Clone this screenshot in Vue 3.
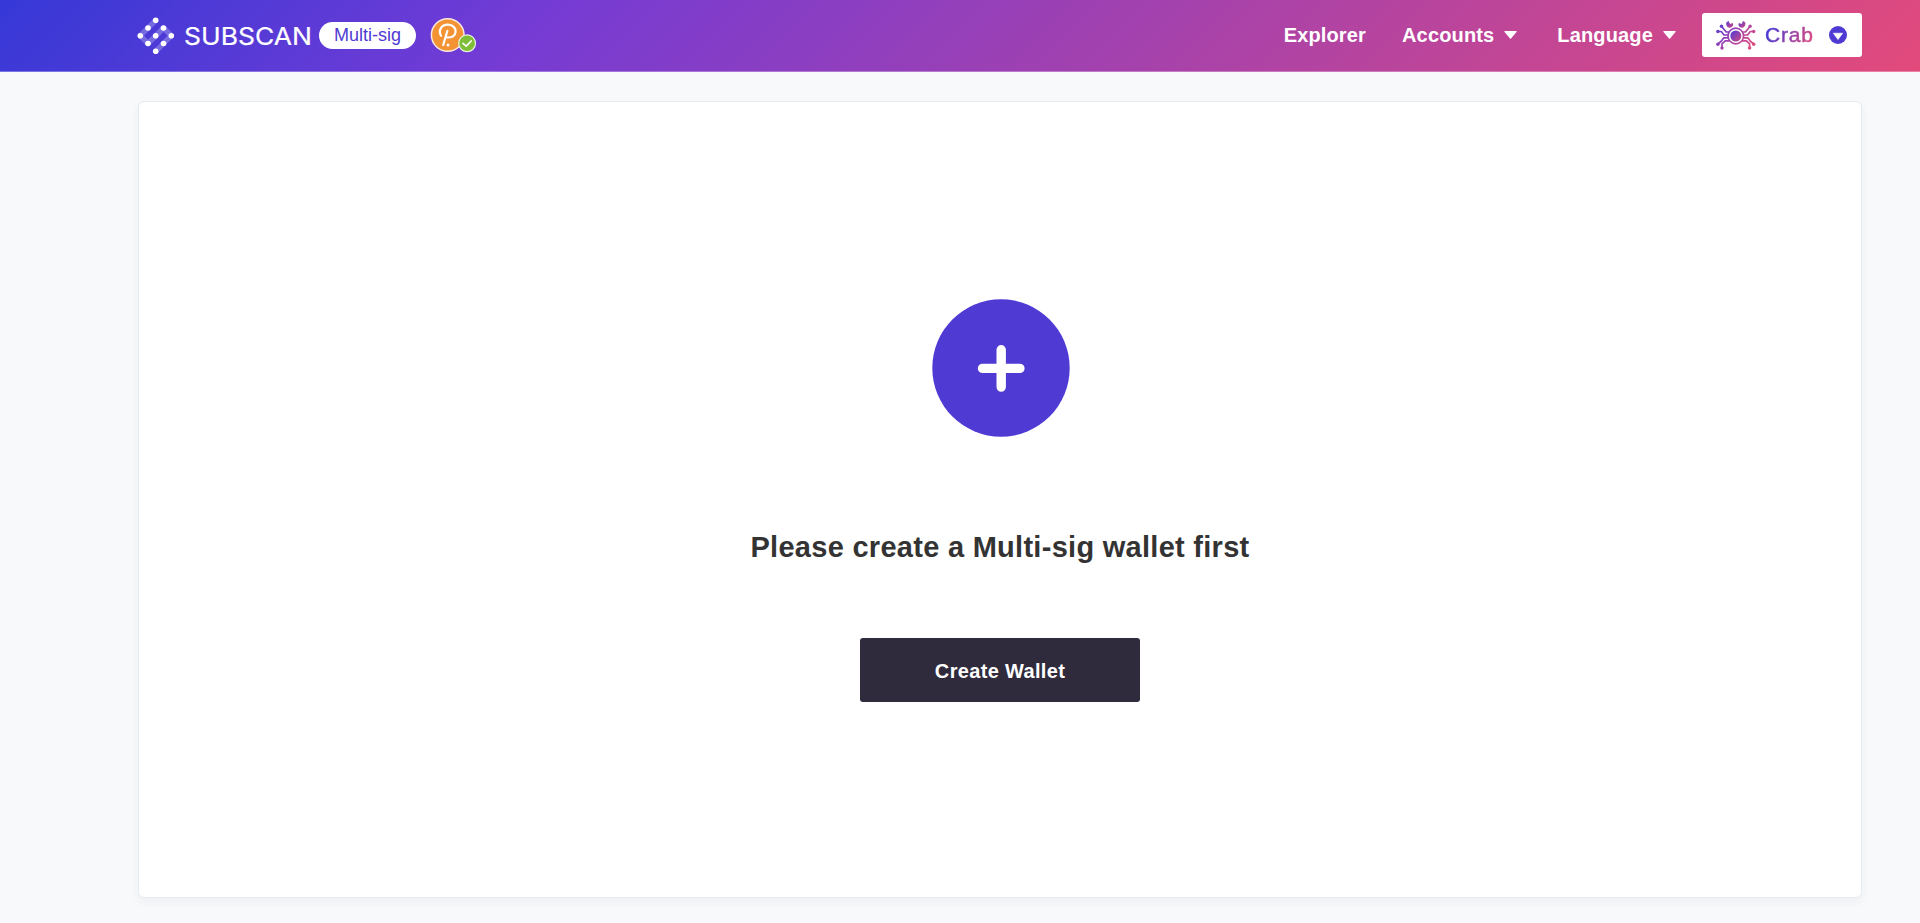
<script setup>
const nav = [
  { label: 'Explorer', menu: false },
  { label: 'Accounts', menu: true },
  { label: 'Language', menu: true },
]
const dots = [
  [155.7, 20.3], [148, 28], [163.5, 28], [140.3, 35.7], [155.7, 35.7],
  [171.3, 35.7], [148, 43.5], [163.5, 43.5], [155.7, 51.3],
]
</script>

<template>
  <div class="page">
    <header class="header">
      <div class="brand">
        <svg class="mark" viewBox="137 17 38 38" width="38" height="38">
          <path d="M155.7 20.3L140.3 35.7L148 43.5L163.5 28L171.3 35.7L155.7 51.3" fill="none" stroke="#fff" stroke-opacity=".25" stroke-width="5.4" stroke-linejoin="round" />
          <circle v-for="(d, i) in dots" :key="i" :cx="d[0]" :cy="d[1]" r="2.8" fill="#fff" />
        </svg>
        <svg class="wordmark" viewBox="0 0 130 26" width="130" height="26">
          <text x="0" y="22.500" textLength="128" lengthAdjust="spacingAndGlyphs">SUBSCAN</text>
        </svg>
        <span class="pill">Multi-sig</span>
        <svg class="extension" viewBox="430 17 47 37" width="47" height="37">
          <circle cx="447.7" cy="35" r="16.3" fill="#f39334" stroke="#fae9dc" stroke-width="1.5" />
          <path d="M441 35.700C438 30 441.500 24.700 447.800 24.700C453.300 24.700 456 28.400 455.600 32C455.200 36.200 451.500 38 446.400 37.400M447.400 30.800L443.200 45" fill="none" stroke="#fff" stroke-width="2.200" stroke-linecap="round" stroke-linejoin="round" />
          <circle cx="448" cy="45" r="1.500" fill="#fff" />
          <circle cx="467.100" cy="43.300" r="8.400" fill="#7fbe36" stroke="#e9f3df" stroke-width="1.200" />
          <path d="M463 43.400L466.200 46.200L471.200 41" fill="none" stroke="#fff" stroke-width="1.700" stroke-linecap="round" stroke-linejoin="round" />
        </svg>
      </div>
      <div class="right">
        <nav class="nav">
          <a v-for="n in nav" :key="n.label" class="link">
            {{ n.label }}
            <svg v-if="n.menu" class="caret" viewBox="0 0 13 8" width="13" height="8"><path d="M.7 0H12.3Q13 .2 12.5 .9L7 7.5Q6.5 8 6 7.5L.5 .9Q0 .2 .7 0Z" fill="#fff" /></svg>
          </a>
        </nav>
        <div class="network">
          <svg class="crab" viewBox="0 0 40 30" width="40" height="30">
            <defs>
              <linearGradient id="crab-line" gradientUnits="userSpaceOnUse" x1="4" y1="4" x2="32" y2="30">
                <stop offset="0" stop-color="#5a3ad0" />
                <stop offset=".5" stop-color="#a844ad" />
                <stop offset="1" stop-color="#df4a7c" />
              </linearGradient>
              <linearGradient id="crab-body" x1="0" y1="0" x2="1" y2="1">
                <stop offset="0" stop-color="#4b3ad5" />
                <stop offset="1" stop-color="#d04a85" />
              </linearGradient>
              <linearGradient id="crab-claw" x1="0" y1="0" x2="1" y2="1">
                <stop offset="0" stop-color="#5a3ad0" />
                <stop offset="1" stop-color="#d04a85" />
              </linearGradient>
            </defs>
            <g fill="none" stroke="url(#crab-line)" stroke-width="1.7" stroke-linejoin="round">
              <circle cx="19.800" cy="16" r="7.800" />
              <path d="M13.500 12H10.200L5.600 6.500M12 15H8L5.300 11.500H1.800M12 17.800H7.800L5 21.500L1.800 24M13.500 20.800H9.200L6 23.800V28M26.100 12H29.400L34 6.500M27.600 15H31.600L34.300 11.500H37.800M27.600 17.800H31.800L34.600 21.500L37.800 24M26.100 20.800H30.400L33.600 23.800V28" />
            </g>
            <circle cx="19.800" cy="16" r="5.500" fill="url(#crab-body)" />
            <g fill="url(#crab-claw)">
              <path d="M12.600 1A3.400 3.400 0 1 0 16.800 3L14 4Z" />
              <path d="M27 1A3.400 3.400 0 1 1 22.800 3L25.600 4Z" />
            </g>
            <g fill="url(#crab-line)">
              <circle cx="5.500" cy="6.300" r="1.700" /><circle cx="34.100" cy="6.300" r="1.700" />
              <circle cx="1.900" cy="11.500" r="1.700" /><circle cx="37.700" cy="11.500" r="1.700" />
              <circle cx="1.900" cy="24.200" r="1.700" /><circle cx="37.700" cy="24.200" r="1.700" />
              <circle cx="6" cy="28" r="1.700" /><circle cx="33.600" cy="28" r="1.700" />
            </g>
          </svg>
          <span class="network-name">Crab</span>
          <svg class="toggle" viewBox="0 0 18 18" width="18" height="18">
            <circle cx="9" cy="9" r="9" fill="#4f3ad4" />
            <path d="M4.300 7.200H13.700L9 13.600Z" fill="#fff" stroke="#fff" stroke-width=".6" stroke-linejoin="round" />
          </svg>
        </div>
      </div>
    </header>
    <main class="card">
      <svg class="add" viewBox="0 0 138 138" width="138" height="138">
        <circle cx="69" cy="69" r="68.700" fill="#4f3ad4" />
        <path d="M69.200 50.700V88.100M50.500 69.400H87.900" stroke="#fff" stroke-width="9.400" stroke-linecap="round" />
      </svg>
      <h1 class="title">Please create a Multi-sig wallet first</h1>
      <button class="create">Create Wallet</button>
    </main>
  </div>
</template>

<style>
html, body { margin: 0; background: #f8f9fb; }
</style>

<style scoped>
.page {
  box-sizing: border-box;
  height: 923px;
  overflow: hidden;
  background: #f8f9fb;
  font-family: "Liberation Sans", Arial, sans-serif;
}
.header {
  box-sizing: border-box;
  height: 72px;
  padding: 0 58px 1px 137px;
  display: flex;
  justify-content: space-between;
  background: linear-gradient(135deg, #3539d7 0%, #733bd5 27%, #e24a7b 100%);
  background-origin: border-box;
  border-bottom: 1px solid rgba(255, 255, 255, .3);
}
.brand { display: flex; align-items: center; }
.mark { flex: none; margin-top: 2px; }
.wordmark { margin-left: 9px; overflow: visible; }
.wordmark text { font: 400 24.500px Inter, sans-serif; fill: #fff; stroke: #fff; stroke-width: .2px; }
.pill {
  box-sizing: border-box;
  width: 97px;
  height: 27px;
  margin-left: 5px;
  border-radius: 14px;
  background: #fff;
  color: #4f3ad4;
  font-size: 18px;
  line-height: 26px;
  text-align: center;
}
.extension { margin-left: 14px; }
.right { display: flex; align-items: center; }
.nav { display: flex; gap: 36px; margin-right: 26px; }
.link {
  display: flex;
  align-items: center;
  color: #fff;
  font-size: 20px;
  font-weight: 700;
  letter-spacing: .15px;
  line-height: 24px;
}
.link + .link + .link { margin-left: 4px; }
.caret { margin-left: 10px; }
.network {
  box-sizing: border-box;
  width: 160px;
  height: 44px;
  padding: 0 15px 0 14px;
  display: flex;
  align-items: center;
  border-radius: 3px;
  background: #fff;
}
.crab { flex: none; }
.network-name {
  margin-left: 9px;
  font-size: 21px;
  letter-spacing: .8px;
  line-height: 26px;
  background: linear-gradient(115deg, #4539d6 10%, #e24a7b 95%);
  -webkit-background-clip: text;
  background-clip: text;
  color: transparent;
  -webkit-text-stroke: .5px transparent;
}
.toggle { margin-left: auto; }
.card {
  box-sizing: border-box;
  width: 1724px;
  height: 797px;
  margin: 29px 0 0 138px;
  padding-top: 197px;
  display: flex;
  flex-direction: column;
  align-items: center;
  border: 1px solid #e6eaf2;
  border-radius: 6px;
  background: #fff;
  box-shadow: 0 4px 9px rgba(40, 50, 50, .05);
}
.add { margin-left: 2px; }
.title {
  margin: 92px 0 0;
  color: #333;
  font-size: 29px;
  font-weight: 700;
  letter-spacing: .28px;
  line-height: 36px;
  white-space: nowrap;
}
.create {
  width: 280px;
  height: 64px;
  margin-top: 73px;
  padding: 0;
  border: 0;
  border-radius: 3px;
  background: #302b3c;
  color: #fff;
  font: 700 20px/66px "Liberation Sans", Arial, sans-serif;
  letter-spacing: .33px;
}
</style>
